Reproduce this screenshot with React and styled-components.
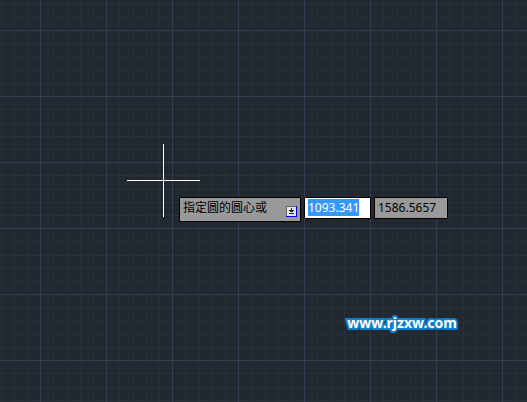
import React, { useEffect, useRef } from 'react'
import styled, { createGlobalStyle } from 'styled-components'

const GlobalStyle = createGlobalStyle`
  * {
    box-sizing: border-box;
  }
  body {
    margin: 0;
    background-color: #212830;
    font-family: 'Noto Sans', 'Noto Sans CJK SC', sans-serif;
    font-size: 12px;
  }
`
const major = '#353c4f'
const minor = '#282f3a'

// one grid cell is 66px, split in five
const lines = (dir) => `linear-gradient(
  ${dir},
  ${major} 0 1px, transparent 1px 13px,
  ${minor} 13px 14px, transparent 14px 27px,
  ${minor} 27px 28px, transparent 28px 40px,
  ${minor} 40px 41px, transparent 41px 53px,
  ${minor} 53px 54px, transparent 54px
)`

const Canvas = styled.main`
  position: relative;
  min-height: 100vh;
  overflow: hidden;
  background-color: #212830;
  background-image: ${lines('to right')}, ${lines('to bottom')};
  background-size: 66px 66px;
  background-position: 40px 30px;
`
const Crosshair = styled.svg`
  position: absolute;
  left: 127px;
  top: 144px;
  display: block;
`
const DynamicInput = styled.form`
  position: absolute;
  left: 179px;
  top: 197px;
  display: flex;
  align-items: flex-start;
  gap: 3px;
`
const Prompt = styled.div`
  display: flex;
  align-items: flex-start;
  justify-content: space-between;
  width: 122px;
  height: 25px;
  padding: 1px 3px;
  border: 1px solid #000;
  background-color: #999;
  color: #000;
  line-height: 18px;
  white-space: nowrap;
`
const OptionsButton = styled.button`
  width: 11px;
  height: 11px;
  margin-top: 7px;
  padding: 0;
  border: none;
  background: none;
`
const Arrow = styled.svg`
  display: block;
`
const Coordinate = styled.input`
  width: ${(props) => props.$width};
  height: 22px;
  padding: 0 3px 1px;
  border: 1px solid #000;
  border-radius: 0;
  outline: none;
  background-color: ${(props) => (props.$active ? '#fff' : '#999')};
  color: #000;
  font: inherit;

  &::selection {
    background-color: #3399ff;
    color: #fff;
  }
`
const SiteLink = styled.a`
  position: absolute;
  right: 70px;
  top: 313px;
  color: #fff;
  font-size: 14px;
  font-weight: 700;
  line-height: 20px;
  text-decoration: none;
  -webkit-text-stroke: 4px #0f80cc;
  paint-order: stroke fill;
`

const App = () => {
  const xInput = useRef(null)

  useEffect(() => {
    xInput.current.focus()
    xInput.current.select()
  }, [])

  return (
    <>
      <GlobalStyle />
      <Canvas>
        <Crosshair width='73' height='73' aria-hidden='true'>
          <path d='M0 36.5H73M36.5 0V73' stroke='#fff' />
        </Crosshair>
        <DynamicInput onSubmit={(e) => e.preventDefault()}>
          <Prompt>
            指定圆的圆心或
            <OptionsButton type='button' aria-label='Options'>
              <Arrow width='11' height='11' shapeRendering='crispEdges'>
                <path d='M0 0H10V10H0z' fill='#e4e4e4' />
                <path d='M10 0H11V11H0V10H10z' fill='#0000d8' />
                <path d='M0 0H10V1H1V10H0z' fill='#666' />
                <path
                  d='M5 2H6V4H8V5H7V6H4V5H3V4H5zM3 7H8V8H3z'
                  fill='#222'
                />
              </Arrow>
            </OptionsButton>
          </Prompt>
          <Coordinate
            ref={xInput}
            $active
            $width='67px'
            aria-label='X'
            defaultValue='1093.341'
          />
          <Coordinate $width='74px' aria-label='Y' defaultValue='1586.5657' />
        </DynamicInput>
        <SiteLink href='#'>www.rjzxw.com</SiteLink>
      </Canvas>
    </>
  )
}

export default App
